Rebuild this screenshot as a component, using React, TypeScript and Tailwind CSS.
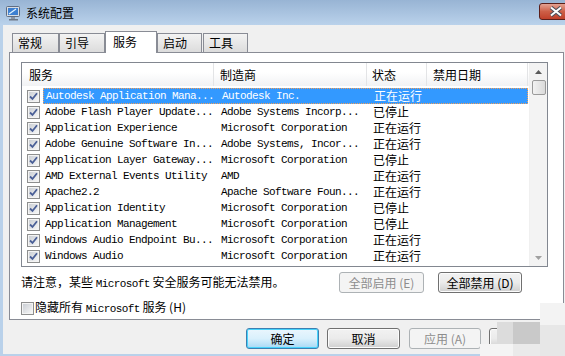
import React from "react";

const cjk = { fontFamily: '"Noto Sans CJK SC", "Noto Sans", sans-serif' };
const mono = { fontFamily: '"Liberation Mono", "Noto Sans CJK SC", monospace' };

type Row = { name: string; maker: string; status: string };

const rows: Row[] = [
  { name: "Autodesk Application Mana...", maker: "Autodesk Inc.", status: "正在运行" },
  { name: "Adobe Flash Player Update...", maker: "Adobe Systems Incorp...", status: "已停止" },
  { name: "Application Experience", maker: "Microsoft Corporation", status: "正在运行" },
  { name: "Adobe Genuine Software In...", maker: "Adobe Systems, Incor...", status: "正在运行" },
  { name: "Application Layer Gateway...", maker: "Microsoft Corporation", status: "已停止" },
  { name: "AMD External Events Utility", maker: "AMD", status: "正在运行" },
  { name: "Apache2.2", maker: "Apache Software Foun...", status: "正在运行" },
  { name: "Application Identity", maker: "Microsoft Corporation", status: "已停止" },
  { name: "Application Management", maker: "Microsoft Corporation", status: "已停止" },
  { name: "Windows Audio Endpoint Bu...", maker: "Microsoft Corporation", status: "正在运行" },
  { name: "Windows Audio", maker: "Microsoft Corporation", status: "正在运行" },
  { name: "", maker: "", status: "" }
];

function Check({ checked = true }: { checked?: boolean }) {
  return (
    <span className="flex h-[13px] w-[13px] shrink-0 items-center justify-center border border-[#8e8f8f] bg-gradient-to-br from-[#dcdcdc] to-[#fbfbfb]">
      <span className="flex h-[11px] w-[11px] items-center justify-center border border-[#f4f4f4] bg-gradient-to-br from-[#cbcfd5] to-[#f6f6f6]">
        {checked && (
          <svg width="9" height="9" viewBox="0 0 9 9">
            <path d="M1 4.5 L3.5 7 L8 1.2" fill="none" stroke="#4a5f97" strokeWidth="1.8" />
          </svg>
        )}
      </span>
    </span>
  );
}

function Btn({ label, disabled, focus, w }: { label: string; disabled?: boolean; focus?: boolean; w: string }) {
  const base = "flex h-[21px] items-center justify-center rounded-[3px] border text-[12px]";
  if (disabled)
    return (
      <div className={`${base} ${w} border-[#adb2b5] bg-[#f4f4f4] text-[#8d8d8d]`} style={cjk}>
        {label}
      </div>
    );
  if (focus)
    return (
      <div className={`${base} ${w} border-[#3c7fb1] bg-gradient-to-b from-[#eaf6fd] via-[#d9f0fc] to-[#a7d9f5] text-black shadow-[inset_0_0_0_1px_#48d3fb]`} style={cjk}>
        {label}
      </div>
    );
  return (
    <div className={`${base} ${w} border-[#707070] bg-gradient-to-b from-[#f2f2f2] via-[#ebebeb] to-[#cfcfcf] text-black shadow-[inset_0_0_0_1px_#fcfcfc]`} style={cjk}>
      {label}
    </div>
  );
}

export default function App() {
  const tabs = [
    { t: "常规", w: "w-[47px]" },
    { t: "引导", w: "w-[46px]" },
    { t: "服务", w: "w-[52px]", active: true },
    { t: "启动", w: "w-[45px]" },
    { t: "工具", w: "w-[45px] ml-px" }
  ];

  return (
    <div className="relative flex h-[356px] w-[565px] flex-col overflow-hidden bg-[#b9d1ea]">
      {/* title bar */}
      <div className="flex h-[25px] shrink-0 items-center justify-between bg-gradient-to-b from-[#98b4d4] to-[#bad2eb] pl-[6px]">
        <div className="flex items-center gap-[5px]">
          <svg width="15" height="16" viewBox="0 0 15 16">
            <rect x="0.5" y="1.5" width="13" height="10" rx="1" fill="#d9dde3" stroke="#5f6d82" />
            <rect x="2" y="3" width="10" height="7" fill="#3d7fd0" />
            <path d="M3 9 L10 4" stroke="#dff2ff" strokeWidth="1.3" />
            <rect x="5" y="12" width="4" height="2" fill="#8d96a3" />
            <rect x="3" y="14" width="9" height="1.5" fill="#6e7785" />
          </svg>
          <span className="text-[12px] text-black" style={cjk}>
            系统配置
          </span>
        </div>
        <div className="-mr-[17px] mt-[-3px] flex h-[17px] w-[43px] items-center justify-center rounded-[3px] border border-[#5b1f1a] bg-gradient-to-b from-[#e3a293] via-[#cd5f47] to-[#c0402a]">
          <svg width="14" height="11" viewBox="0 0 14 11" className="-ml-[10px]">
            <path d="M2 1.5 L12 9.5 M12 1.5 L2 9.5" stroke="#4a4e5a" strokeWidth="4" />
            <path d="M2 1.5 L12 9.5 M12 1.5 L2 9.5" stroke="#ffffff" strokeWidth="2" />
          </svg>
        </div>
      </div>

      {/* body */}
      <div className="mb-[2px] ml-[3px] flex flex-1 flex-col bg-[#f0f0f0] pl-[6px] pt-[6px]">
        <div className="relative z-10 flex h-[21px] items-end pl-[3px]">
          {tabs.map((tab) =>
            tab.active ? (
              <div
                key={tab.t}
                className={`${tab.w} -mb-px flex h-[22px] items-start border border-b-0 border-[#898c95] bg-white pl-[7px] pt-[1px] text-[12px] text-black`}
                style={cjk}
              >
                {tab.t}
              </div>
            ) : (
              <div
                key={tab.t}
                className={`${tab.w} flex h-[19px] items-center border border-b-0 border-[#898c95] bg-gradient-to-b from-[#f3f3f3] to-[#dcdcdc] pl-[5px] text-[12px] text-black`}
                style={cjk}
              >
                {tab.t}
              </div>
            )
          )}
        </div>

        {/* tab panel */}
        <div className="flex h-[268px] w-[555px] flex-col border border-[#898c95] bg-white pl-[11px] pt-[9px]">
          <div className="flex h-[205px] w-[527px] border border-[#828790] bg-white">
            <div className="flex w-[507px] flex-col overflow-hidden">
              <div className="flex h-[23px] shrink-0 bg-gradient-to-b from-white from-40% to-[#f1f2f4] text-[12px] text-black" style={cjk}>
                <div className="flex w-[192px] items-center border-r border-[#e3e4e6] pl-[7px]">服务</div>
                <div className="flex w-[153px] items-center border-r border-[#e3e4e6] pl-[6px]">制造商</div>
                <div className="flex w-[60px] items-center border-r border-[#e3e4e6] pl-[5px]">状态</div>
                <div className="flex w-[101px] items-center border-r border-[#e3e4e6] pl-[6px]">禁用日期</div>
              </div>
              <div className="flex flex-col pt-[2px]">
                {rows.map((r, i) => (
                  <div key={i} className="flex h-[16px] shrink-0 items-center">
                    <div className="flex w-[21px] shrink-0 pl-[5px]">
                      <Check />
                    </div>
                    <div
                      className={`flex h-[16px] w-[485px] items-center pl-[2px] ${
                        i === 0 ? "border border-dotted border-[#f2a05a] bg-[#3399ff] text-white" : "text-black"
                      }`}
                    >
                      <span className="w-[176px] shrink-0 whitespace-pre text-[11px] tracking-[-0.6px]" style={mono}>
                        {r.name}
                      </span>
                      <span className="w-[152px] shrink-0 whitespace-pre text-[11px] tracking-[-0.6px]" style={mono}>
                        {r.maker}
                      </span>
                      <span className="text-[12px]" style={cjk}>
                        {r.status}
                      </span>
                    </div>
                  </div>
                ))}
              </div>
            </div>
            {/* scrollbar */}
            <div className="flex w-[18px] flex-col items-center border-l border-[#f0f0f0] bg-[#f3f3f3]">
              <div className="flex h-[17px] w-full items-center justify-center">
                <svg width="7" height="4" viewBox="0 0 7 4">
                  <path d="M0 4 L3.5 0 L7 4 Z" fill="#5a5a5a" />
                </svg>
              </div>
              <div className="h-[15px] w-[14px] rounded-[2px] border border-[#9a9a9a] bg-gradient-to-r from-[#f2f2f2] to-[#dadada]" />
              <div className="flex-1" />
              <div className="flex h-[17px] w-full items-center justify-center">
                <svg width="7" height="4" viewBox="0 0 7 4">
                  <path d="M0 0 L3.5 4 L7 0 Z" fill="#a0a0a0" />
                </svg>
              </div>
            </div>
          </div>

          <div className="mt-[5px] flex h-[21px] items-center">
            <span className="w-[318px] text-[12px] text-black" style={cjk}>
              请注意，某些 <span style={mono} className="text-[11px] tracking-[-0.6px]">Microsoft</span> 安全服务可能无法禁用。
            </span>
            <Btn label="全部启用 (E)" disabled w="w-[85px]" />
            <div className="w-[14px]" />
            <Btn label="全部禁用 (D)" w="w-[84px]" />
          </div>

          <div className="mt-[8px] flex h-[14px] items-center gap-[1px]">
            <Check checked={false} />
            <span className="text-[12px] text-black" style={cjk}>
              隐藏所有 <span style={mono} className="text-[11px] tracking-[-0.6px]">Microsoft</span> 服务 (H)
            </span>
          </div>
        </div>

        <div className="mt-[8px] flex items-center pl-[237px]">
          <Btn label="确定" focus w="w-[73px]" />
          <div className="w-[8px]" />
          <Btn label="取消" w="w-[73px]" />
          <div className="w-[9px]" />
          <Btn label="应用 (A)" disabled w="w-[72px]" />
          <div className="w-[8px]" />
          <Btn label="帮助" w="w-[72px]" />
        </div>
      </div>

      {/* mosaic watermark over the corner */}
      <div className="absolute left-[513px] top-[322px] h-[22px] w-[27px] bg-[#c9c9c9]" />
      <div className="absolute left-[540px] top-[303px] h-[22px] w-[25px] bg-[#f3f3f3]" />
      <div className="absolute left-[540px] top-[325px] h-[31px] w-[25px] bg-[#e7e7e7]" />
      <div className="absolute left-[497px] top-[322px] h-[22px] w-[16px] bg-[#dcdcdc]" />
      <div className="absolute left-[480px] top-[344px] h-[12px] w-[33px] bg-[#f4f4f4]" />
      <div className="absolute left-[513px] top-[344px] h-[12px] w-[27px] bg-[#eaeaea]" />
    </div>
  );
}
